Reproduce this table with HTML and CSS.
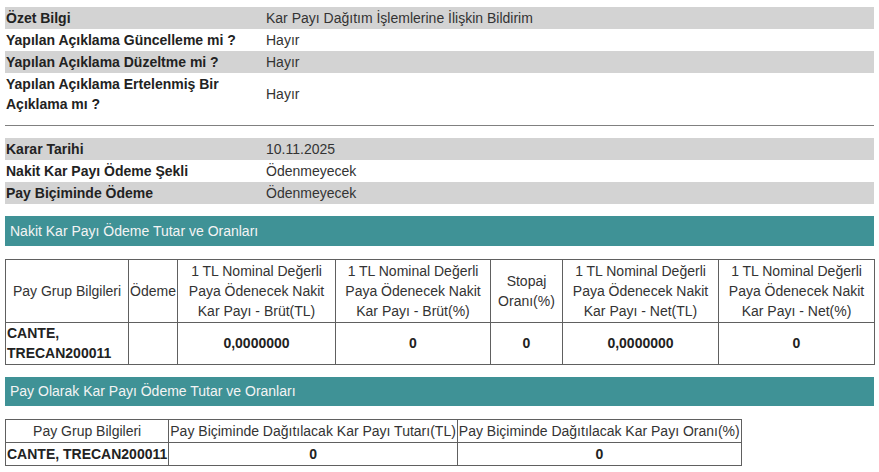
FILE: index.html
```html
<!DOCTYPE html>
<html lang="tr">
<head>
<meta charset="utf-8">
<title>Kar Payı Dağıtım</title>
<link rel="stylesheet" href="styles.css">
</head>
<body>
<table class="info">
  <colgroup><col class="c-label"><col></colgroup>
  <tr class="alt"><td class="lbl">Özet Bilgi</td><td>Kar Payı Dağıtım İşlemlerine İlişkin Bildirim</td></tr>
  <tr><td class="lbl">Yapılan Açıklama Güncelleme mi ?</td><td>Hayır</td></tr>
  <tr class="alt"><td class="lbl">Yapılan Açıklama Düzeltme mi ?</td><td>Hayır</td></tr>
  <tr><td class="lbl">Yapılan Açıklama Ertelenmiş Bir Açıklama mı ?</td><td>Hayır</td></tr>
</table>
<hr class="sep">
<table class="info">
  <colgroup><col class="c-label"><col></colgroup>
  <tr class="alt"><td class="lbl">Karar Tarihi</td><td>10.11.2025</td></tr>
  <tr><td class="lbl">Nakit Kar Payı Ödeme Şekli</td><td>Ödenmeyecek</td></tr>
  <tr class="alt"><td class="lbl">Pay Biçiminde Ödeme</td><td>Ödenmeyecek</td></tr>
</table>
<div class="band">Nakit Kar Payı Ödeme Tutar ve Oranları</div>
<table class="grid cash">
  <colgroup>
    <col class="w1"><col class="w2"><col class="w3"><col class="w4"><col class="w5"><col class="w6"><col class="w7">
  </colgroup>
  <tr>
    <th>Pay Grup Bilgileri</th>
    <th>Ödeme</th>
    <th>1 TL Nominal Değerli Paya Ödenecek Nakit Kar Payı - Brüt(TL)</th>
    <th>1 TL Nominal Değerli Paya Ödenecek Nakit Kar Payı - Brüt(%)</th>
    <th>Stopaj Oranı(%)</th>
    <th>1 TL Nominal Değerli Paya Ödenecek Nakit Kar Payı - Net(TL)</th>
    <th>1 TL Nominal Değerli Paya Ödenecek Nakit Kar Payı - Net(%)</th>
  </tr>
  <tr>
    <td class="grp">CANTE, TRECAN200011</td>
    <td></td>
    <td class="num">0,0000000</td>
    <td class="num">0</td>
    <td class="num">0</td>
    <td class="num">0,0000000</td>
    <td class="num">0</td>
  </tr>
</table>
<div class="band band2">Pay Olarak Kar Payı Ödeme Tutar ve Oranları</div>
<table class="grid share">
  <tr>
    <th>Pay Grup Bilgileri</th>
    <th>Pay Biçiminde Dağıtılacak Kar Payı Tutarı(TL)</th>
    <th>Pay Biçiminde Dağıtılacak Kar Payı Oranı(%)</th>
  </tr>
  <tr>
    <td class="grp nowrap">CANTE, TRECAN200011</td>
    <td class="num">0</td>
    <td class="num">0</td>
  </tr>
</table>
</body>
</html>
```
FILE: styles.css
```css
html, body {
  margin: 0;
  padding: 0;
  background: #fff;
}
body {
  padding: 7px 5px 0 5px;
  font-family: "Liberation Sans", Arial, sans-serif;
  font-size: 14px;
  line-height: 20px;
  color: #333;
}
table {
  border-collapse: collapse;
  font-size: 14px;
}
.info {
  width: 100%;
  table-layout: fixed;
}
.info .c-label {
  width: 260px;
}
.info td {
  padding: 1px 1px;
  vertical-align: middle;
  line-height: 20px;
}
.info tr.alt td {
  background: #d3d3d3;
}
.info td.lbl {
  font-weight: bold;
  color: #222;
}
.sep {
  border: 0;
  border-top: 1px solid #808080;
  height: 0;
  margin: 10px 0 12px 0;
}
.band {
  margin: 12px 0 13px 0;
  height: 30px;
  line-height: 30px;
  padding-left: 5px;
  background: #3f9296;
  color: #f4f4f4;
}
.band2 {
  height: 29px;
  line-height: 29px;
}
.grid td, .grid th {
  border: 1px solid #606060;
  padding: 1px 1px;
  line-height: 20px;
  font-weight: normal;
  text-align: center;
  vertical-align: middle;
}
.grid td.grp {
  font-weight: bold;
  text-align: left;
  color: #222;
}
.grid td.num {
  font-weight: bold;
  color: #222;
}
.grid .nowrap {
  white-space: nowrap;
}
.cash {
  width: 100%;
  table-layout: fixed;
}
.cash td {
  padding: 0 1px 1px 1px;
}
.cash .w1 { width: 123px; }
.cash .w2 { width: 49px; }
.cash .w3 { width: 158px; }
.cash .w4 { width: 155px; }
.cash .w5 { width: 72px; }
.cash .w6 { width: 156px; }
.cash .w7 { width: 156px; }
.share {
  width: auto;
}
```
